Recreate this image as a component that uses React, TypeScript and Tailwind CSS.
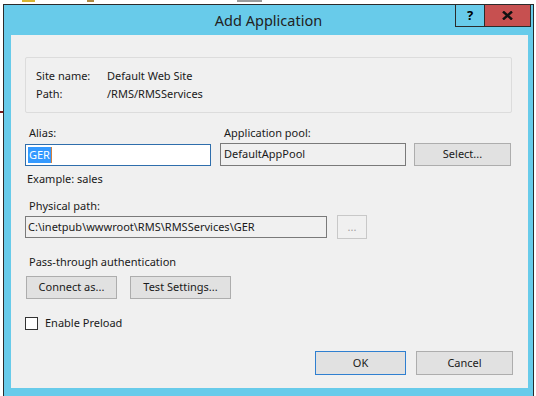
import React from "react";

const font = { fontFamily: '"Noto Sans", "Open Sans", sans-serif' };

function Btn({ children, w, h = "h-[23px]", primary = false, disabled = false }: { children: React.ReactNode; w: string; h?: string; primary?: boolean; disabled?: boolean }) {
  return (
    <div
      className={`${w} ${h} flex items-center justify-center border text-[11px] ${
        primary ? "border-[#2f7fd0] bg-[#e1e1e1] text-[#1a1a1a]" : disabled ? "border-[#c8c8c8] bg-[#f0f0f0] text-[#a0a0a0]" : "border-[#adadad] bg-[#e1e1e1] text-[#1a1a1a]"
      }`}
    >
      {children}
    </div>
  );
}

export default function App() {
  return (
    <div className="relative w-[536px] h-[396px] overflow-hidden bg-white pt-[4px] pl-[3px]" style={font}>
      {/* desktop fragments */}
      <div className="absolute left-[22px] top-0 w-[13px] h-[2px] bg-[#d8b530]" />
      <div className="absolute left-[87px] top-0 w-[7px] h-[2px] bg-[#b08a40]" />
      <div className="absolute left-[237px] top-0 w-[25px] h-[2px] bg-[#9a9a9a]" />
      <div className="absolute left-0 top-[111px] w-[3px] h-[2px] bg-[#7a1a1a]" />

      <div className="relative w-[531px] h-[400px] border border-[#2b2b2b] bg-[#68cbea] flex flex-col">
        {/* title bar */}
        <div className="h-[30px] flex items-center justify-center text-[14.5px] leading-[30px] text-[#222]">
          Add Application
        </div>
        <div className="absolute left-[451px] top-[-1px] flex">
          <div className="w-[30px] h-[23px] border border-[#2b2b2b] flex items-center justify-center text-[13px] font-bold text-black leading-none">?</div>
          <div className="w-[46px] h-[23px] border border-l-0 border-[#2b2b2b] bg-[#c75050] flex items-center justify-center">
            <svg width="11" height="9" viewBox="0 0 11 9">
              <path d="M1 0.5 L10 8.5 M10 0.5 L1 8.5" stroke="#111" strokeWidth="2.4" />
            </svg>
          </div>
        </div>

        {/* content */}
        <div className="ml-[7px] w-[517px] h-[353px] bg-[#f0f0f0] flex flex-col text-[11px] text-[#1a1a1a]">
          {/* info box */}
          <div className="mt-[22px] ml-[14px] w-[487px] h-[56px] border border-[#dcdcdc] rounded-[2px] pt-[9px] pl-[10px]">
            <div className="flex h-[18px] items-center">
              <div className="w-[71px]">Site name:</div>
              <div>Default Web Site</div>
            </div>
            <div className="flex h-[18px] items-center">
              <div className="w-[71px]">Path:</div>
              <div>/RMS/RMSServices</div>
            </div>
          </div>

          {/* alias / pool labels */}
          <div className="mt-[12px] flex h-[16px] items-center">
            <div className="ml-[18px] w-[195px]">Alias:</div>
            <div>Application pool:</div>
          </div>
          <div className="mt-[2px] ml-[14px] flex items-start">
            <div className="mt-[1px] w-[186px] h-[22px] border border-[#2f6eac] bg-white flex items-center pl-[2px]">
              <span className="bg-[#3399ff] text-white h-[16px] leading-[16px] px-[1px]">GER</span>
              <span className="w-[1px] h-[16px] bg-[#d08040]" />
            </div>
            <div className="ml-[9px] w-[186px] h-[23px] border border-[#7a7a7a] bg-[#f0f0f0] flex items-center pl-[3px]">DefaultAppPool</div>
            <div className="ml-[8px]">
              <Btn w="w-[97px]">Select...</Btn>
            </div>
          </div>
          <div className="mt-[5px] ml-[16px] h-[16px] leading-[16px]">Example: sales</div>

          <div className="mt-[11px] ml-[18px] h-[16px] leading-[16px]">Physical path:</div>
          <div className="mt-[1px] ml-[14px] flex items-start">
            <div className="mt-[1px] w-[302px] h-[22px] border border-[#7a7a7a] bg-[#f0f0f0] flex items-center pl-[2px]">
              C:\inetpub\wwwroot\RMS\RMSServices\GER
            </div>
            <div className="ml-[10px]">
              <Btn w="w-[30px]" h="h-[24px]" disabled>...</Btn>
            </div>
          </div>

          <div className="mt-[15px] ml-[18px] h-[16px] leading-[16px]">Pass-through authentication</div>
          <div className="mt-[6px] ml-[15px] flex gap-[13px]">
            <Btn w="w-[91px]">Connect as...</Btn>
            <Btn w="w-[101px]">Test Settings...</Btn>
          </div>

          <div className="mt-[16px] ml-[14px] flex items-center h-[16px] gap-[7px]">
            <div className="w-[13px] h-[13px] border border-[#333] bg-white" />
            <div>Enable Preload</div>
          </div>

          <div className="mt-[20px] flex justify-end gap-[10px] pr-[15px]">
            <Btn w="w-[91px]" h="h-[24px]" primary>OK</Btn>
            <Btn w="w-[97px]" h="h-[24px]">Cancel</Btn>
          </div>
        </div>
      </div>
    </div>
  );
}
